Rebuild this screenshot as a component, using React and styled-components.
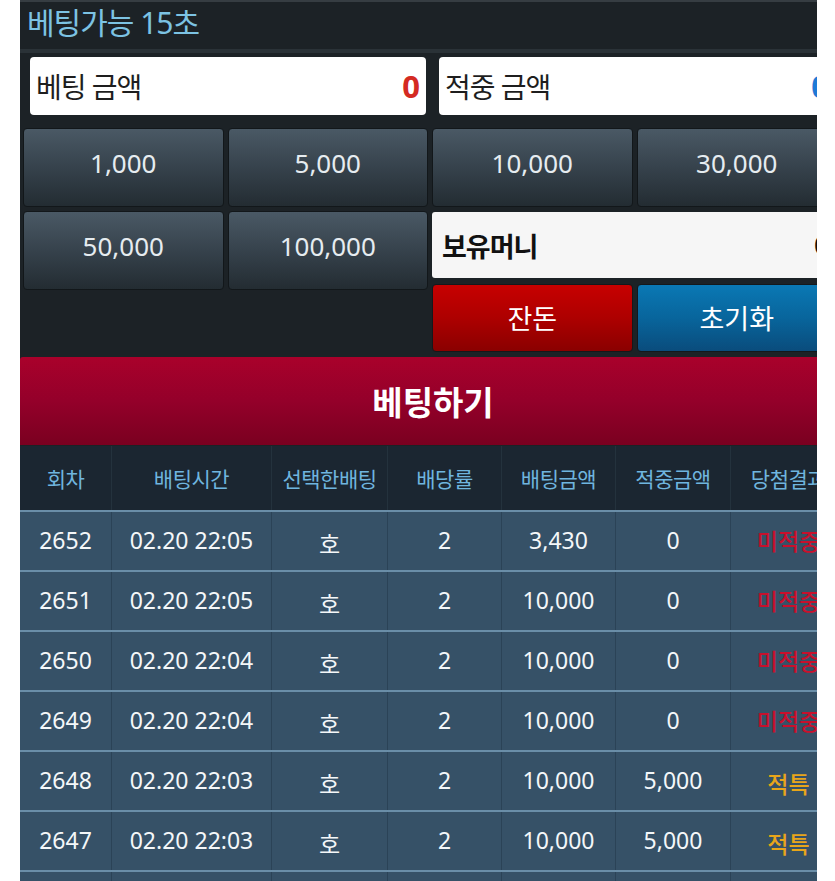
import React from 'react';
import styled, { createGlobalStyle } from 'styled-components';

const GlobalStyle = createGlobalStyle`
  body {
    margin: 0;
    background: #ffffff;
    font-family: 'Noto Sans', 'Noto Sans CJK KR', sans-serif;
  }
`;

const chips = ['1,000', '5,000', '10,000', '30,000', '50,000', '100,000'];

const rows = [
  { no: 2652, time: '02.20 22:05', pick: '호', rate: 2, bet: '3,430', win: '0', result: '미적중' },
  { no: 2651, time: '02.20 22:05', pick: '호', rate: 2, bet: '10,000', win: '0', result: '미적중' },
  { no: 2650, time: '02.20 22:04', pick: '호', rate: 2, bet: '10,000', win: '0', result: '미적중' },
  { no: 2649, time: '02.20 22:04', pick: '호', rate: 2, bet: '10,000', win: '0', result: '미적중' },
  { no: 2648, time: '02.20 22:03', pick: '호', rate: 2, bet: '10,000', win: '5,000', result: '적특' },
  { no: 2647, time: '02.20 22:03', pick: '호', rate: 2, bet: '10,000', win: '5,000', result: '적특' },
  { no: 2646, time: '02.20 22:02', pick: '호', rate: 2, bet: '10,000', win: '5,000', result: '적특' },
];

const columns = ['회차', '배팅시간', '선택한배팅', '배당률', '배팅금액', '적중금액', '당첨결과'];

const App = () => {
  return (
    <>
      <GlobalStyle />
      <Viewport>
        <Panel>
          <TopBar>
            <Countdown>베팅가능 15초</Countdown>
          </TopBar>

          <AmountRow>
            <AmountBox>
              <AmountLabel>베팅 금액</AmountLabel>
              <AmountValue color="#d42a22">0</AmountValue>
            </AmountBox>
            <AmountBox>
              <AmountLabel>적중 금액</AmountLabel>
              <AmountValue color="#1f7ad6">0</AmountValue>
            </AmountBox>
          </AmountRow>

          <ChipGrid>
            {chips.map((c) => (
              <ChipButton key={c}>{c}</ChipButton>
            ))}
            <WalletArea>
              <WalletBox>
                <WalletLabel>보유머니</WalletLabel>
                <WalletValue>0</WalletValue>
              </WalletBox>
              <ActionRow>
                <ActionButton variant="red">잔돈</ActionButton>
                <ActionButton variant="blue">초기화</ActionButton>
              </ActionRow>
            </WalletArea>
          </ChipGrid>

          <BetButton>베팅하기</BetButton>

          <Table>
            <thead>
              <tr>
                {columns.map((c) => (
                  <HeadCell key={c}>{c}</HeadCell>
                ))}
              </tr>
            </thead>
            <tbody>
              {rows.map((r) => (
                <Row key={r.no}>
                  <Cell>{r.no}</Cell>
                  <Cell>{r.time}</Cell>
                  <Cell>
                    <Pick>{r.pick}</Pick>
                  </Cell>
                  <Cell>{r.rate}</Cell>
                  <Cell>{r.bet}</Cell>
                  <Cell>{r.win}</Cell>
                  <Cell>
                    <Result win={r.result === '적특'}>{r.result}</Result>
                  </Cell>
                </Row>
              ))}
            </tbody>
          </Table>
        </Panel>
      </Viewport>
    </>
  );
};

export default App;

const Viewport = styled.div`
  margin-left: 20px;
  width: 797px;
  overflow: hidden;
`;

const Panel = styled.div`
  width: 826px;
  background: #1c2226;
`;

const TopBar = styled.div`
  height: 47px;
  border-top: 2px solid #363d42;
  border-bottom: 4px solid #2a3237;
  display: flex;
  align-items: center;
  padding-left: 7px;
`;

const Countdown = styled.div`
  color: #7cc3e3;
  font-size: 30px;
  letter-spacing: -1px;
  line-height: 1;
  margin-top: -6px;
`;

const AmountRow = styled.div`
  display: flex;
  gap: 13px;
  padding: 4px 0 0 10px;
`;

const AmountBox = styled.div`
  flex: 0 0 396px;
  height: 58px;
  background: #ffffff;
  border-radius: 4px;
  display: flex;
  align-items: center;
  justify-content: space-between;
  padding: 0 6px 0 6px;
  box-sizing: border-box;
`;

const AmountLabel = styled.span`
  font-size: 28px;
  color: #1e1e1e;
  letter-spacing: -1px;
`;

const AmountValue = styled.span`
  font-size: 31px;
  font-weight: 700;
  color: ${(p) => p.color};
`;

const ChipGrid = styled.div`
  display: grid;
  grid-template-columns: repeat(4, 200.5px);
  align-items: start;
  gap: 4px;
  padding: 13px 0 0 3px;
`;

const ChipButton = styled.button`
  height: 79px;
  font-family: inherit;
  font-size: 26px;
  color: #e6ecf0;
  background: linear-gradient(to bottom, #4a5965 0%, #36424c 50%, #232c32 100%);
  border: 1px solid #12171a;
  border-radius: 4px;
  padding: 0 0 9px;
  cursor: pointer;
`;

const WalletArea = styled.div`
  grid-column: 3 / span 2;
  grid-row: 2;
  display: flex;
  flex-direction: column;
  gap: 6px;
  padding-top: 1px;
`;

const WalletBox = styled.div`
  height: 66px;
  background: #f6f6f6;
  border-radius: 3px;
  display: flex;
  align-items: center;
  justify-content: space-between;
  padding: 0 8px 0 10px;
`;

const WalletLabel = styled.span`
  font-size: 27px;
  font-weight: 700;
  color: #111;
  letter-spacing: -1px;
`;

const WalletValue = styled.span`
  font-size: 26px;
  font-weight: 700;
  color: #111;
`;

const ActionRow = styled.div`
  display: grid;
  grid-template-columns: 200.5px 200.5px;
  gap: 4px;
`;

const ActionButton = styled.button`
  height: 68px;
  font-family: inherit;
  font-size: 27px;
  color: #ffffff;
  border: 1px solid #14181b;
  border-radius: 4px;
  padding: 0 0 2px;
  cursor: pointer;
  background: ${(p) =>
    p.variant === 'red'
      ? 'linear-gradient(to bottom, #c70000 0%, #ad0000 50%, #8a0000 100%)'
      : 'linear-gradient(to bottom, #0a78b4 0%, #08659c 50%, #0a4c7c 100%)'};
`;

const BetButton = styled.button`
  display: block;
  width: 100%;
  height: 88px;
  margin-top: 5px;
  font-family: inherit;
  font-size: 33px;
  font-weight: 700;
  color: #ffffff;
  border: none;
  border-radius: 3px 3px 0 0;
  background: linear-gradient(to bottom, #a9012b 0%, #94002a 50%, #7a0020 100%);
  padding: 0;
  cursor: pointer;
`;

const Table = styled.table`
  width: 826px;
  table-layout: fixed;
  border-collapse: collapse;
  margin-top: 1px;
`;

const HeadCell = styled.th`
  height: 64px;
  background: #1b2631;
  color: #6fb5df;
  font-size: 21px;
  font-weight: 400;
  letter-spacing: -0.5px;
  border-left: 1px solid #24323d;
  padding: 0;

  &:first-child { width: 91px; border-left: none; }
  &:nth-child(2) { width: 159px; }
  &:nth-child(3) { width: 115px; }
  &:nth-child(4) { width: 113px; }
  &:nth-child(5) { width: 113px; }
  &:nth-child(6) { width: 114px; }
`;

const Row = styled.tr`
  background: #365167;
  border-top: 2px solid #6a8ea8;
`;

const Cell = styled.td`
  height: 56px;
  padding: 0 0 2px;
  text-align: center;
  color: #f4f7f9;
  font-size: 23px;
  border-left: 1px solid #2b4357;

  &:first-child {
    border-left: none;
  }
`;

const Pick = styled.span`
  display: inline-block;
  margin-top: 5px;
`;

const Result = styled.span`
  display: inline-block;
  color: ${(p) => (p.win ? '#e8a51a' : '#c8102c')};
  margin-top: ${(p) => (p.win ? '6px' : '0')};
  font-weight: 500;
`;
